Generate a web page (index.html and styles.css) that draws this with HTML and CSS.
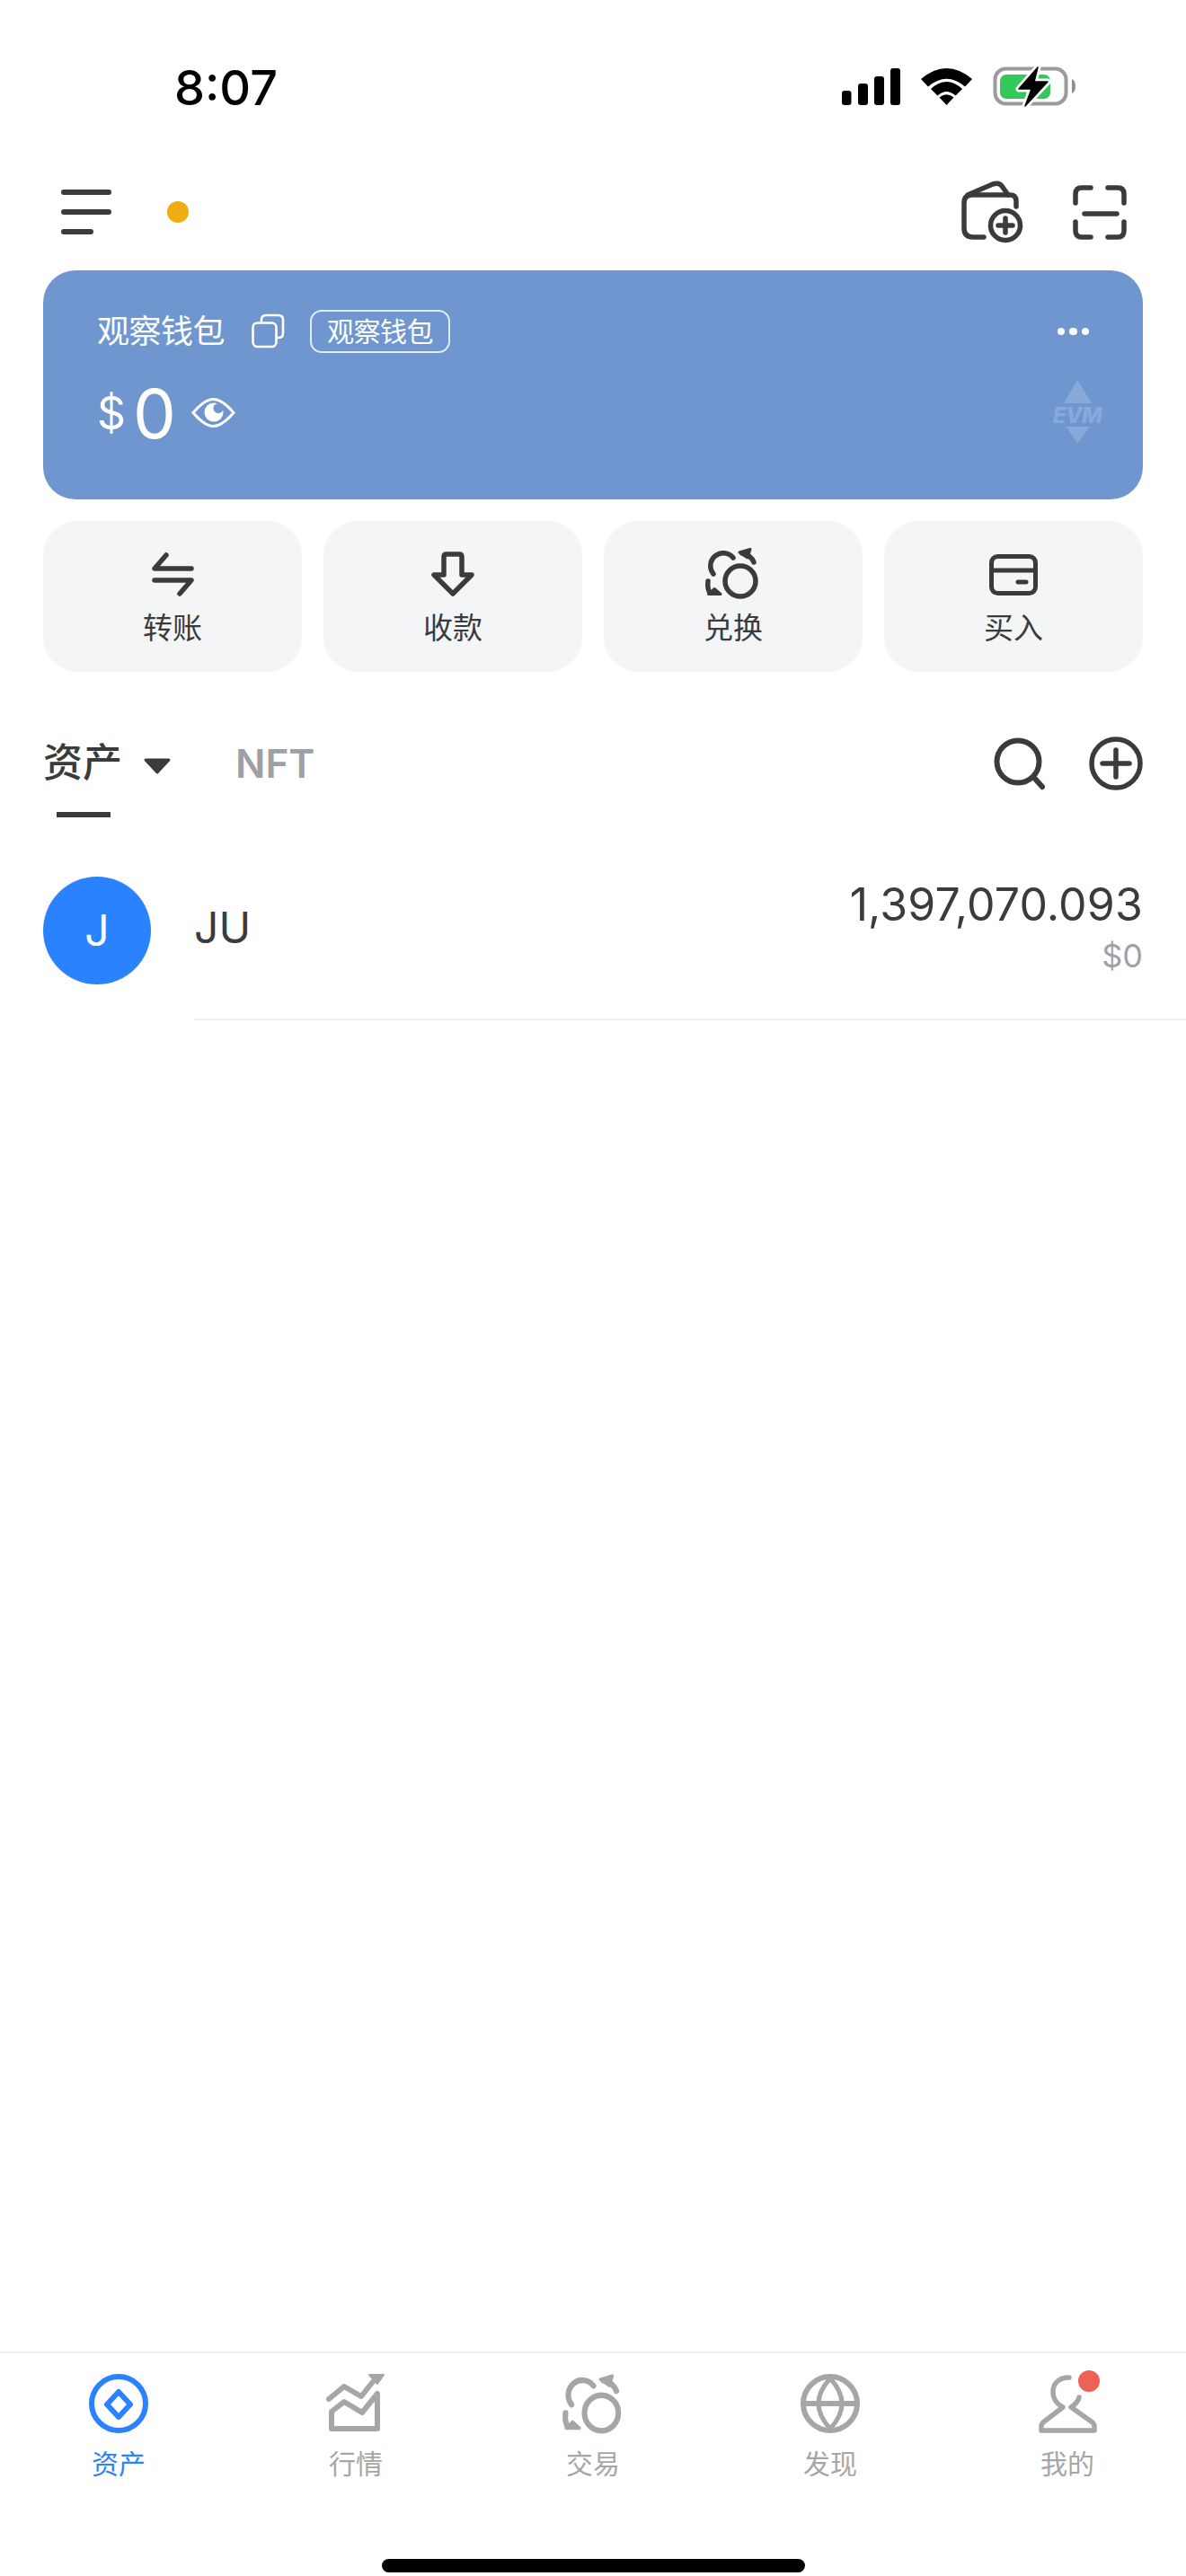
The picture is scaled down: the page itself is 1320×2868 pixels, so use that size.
FILE: index.html
```html
<!DOCTYPE html>
<html lang="zh-CN">
<head>
<meta charset="utf-8">
<title>钱包</title>
<link rel="stylesheet" href="styles.css">
</head>
<body>
<svg class="defs" width="0" height="0">
  <symbol id="swap" viewBox="784 608 64 60" preserveAspectRatio="none">
    <g fill="none" stroke="currentColor" stroke-width="5.5" stroke-linecap="round" stroke-linejoin="round">
      <circle cx="824" cy="647" r="17"/>
      <path d="M816 621A14 14 0 1 0 794 639"/>
      <path d="M826 616Q836 618 839 626"/>
      <path d="M788 647Q787 655 790 660"/>
      <path fill="currentColor" stroke-width="3" d="M835 611.500 823 615 832 621Z"/>
      <path fill="currentColor" stroke-width="3" d="M788.500 661.500H802L795 655.500Z"/>
    </g>
  </symbol>
</svg>
<div class="screen">
  <header class="status">
    <span class="time">8:07</span>
    <svg class="status-icons" width="262" height="48" viewBox="936 73 262 48">
      <g fill="#000">
        <rect x="937" y="101" width="10.500" height="16" rx="3"/>
        <rect x="955" y="93" width="11" height="24" rx="3"/>
        <rect x="973" y="85" width="11" height="32" rx="3"/>
        <rect x="991" y="76" width="11" height="41" rx="3"/>
        <path d="M1025 88Q1053.500 64 1082 88L1074 96.500Q1053.500 79 1033 96.500Z"/>
        <path d="M1036 99Q1053.500 83 1071 99L1063.500 106.500Q1053.500 97.500 1043.500 106.500Z"/>
        <path d="M1045.500 108.500Q1053.500 102 1061.500 108.500L1053.500 117Z"/>
      </g>
      <rect x="1107.500" y="76.500" width="79" height="39" rx="12" fill="none" stroke="#9b9b9b" stroke-width="4"/>
      <rect x="1113" y="83" width="56" height="27" rx="7" fill="#34c759"/>
      <path d="M1193 88Q1197 90 1197 96Q1197 102 1193 104Z" fill="#8f8f8f"/>
      <path d="M1155 75 1134 99H1148L1141 118 1166 91H1151Z" fill="#000" stroke="#fff" stroke-width="7" stroke-linejoin="round"/>
      <path d="M1155 75 1134 99H1148L1141 118 1166 91H1151Z" fill="#000" stroke="#000" stroke-width="1.500" stroke-linejoin="round"/>
    </svg>
  </header>

  <nav class="topbar">
    <div class="topbar-left">
      <div class="menu">
        <span class="menu-line"></span>
        <span class="menu-line"></span>
        <span class="menu-line menu-line-short"></span>
      </div>
      <span class="status-dot"></span>
    </div>
    <div class="topbar-right">
      <svg class="icon" width="70" height="70" viewBox="1069 201 70 70" fill="none" stroke="#3a3b3d" stroke-width="5.500" stroke-linecap="round" stroke-linejoin="round">
        <path d="M1131 230V224Q1131 217 1124 217H1082Q1073 217 1073 226V254Q1073 264 1083 264H1095"/>
        <path d="M1077 217 1105 205Q1112 203 1115 207L1122 217"/>
        <circle cx="1119" cy="251" r="16.500"/>
        <path d="M1119 243V259M1111 251H1127"/>
      </svg>
      <svg class="icon" width="64" height="64" viewBox="1192 202 64 64" fill="none" stroke="#3a3b3d" stroke-width="5.500" stroke-linecap="round">
        <path d="M1197 224V214Q1197 207 1204 207H1214"/>
        <path d="M1233 207H1244Q1251 207 1251 214V224"/>
        <path d="M1197 245V255Q1197 262 1204 262H1214"/>
        <path d="M1251 245V255Q1251 262 1244 262H1233"/>
        <path d="M1207 236H1243"/>
      </svg>
    </div>
  </nav>

  <section class="card">
    <div class="card-title-row">
      <span class="card-title">观察钱包</span>
      <svg class="copy" width="38" height="40" viewBox="279 349 38 40" fill="none" stroke="#fff" stroke-width="2.600">
        <rect x="281.500" y="359.500" width="26" height="26.500" rx="5"/>
        <path d="M291 358V356Q291 351 296 351H310Q315 351 315 356V371Q315 376 310 376H308"/>
      </svg>
      <span class="badge">观察钱包</span>
      <span class="more"><i></i><i></i><i></i></span>
    </div>
    <div class="amount-row">
      <span class="currency">$</span>
      <span class="amount">0</span>
      <svg class="eye" width="50" height="36" viewBox="214 444 50 36">
        <path d="M216 461.500C225 451 232 446.500 238.500 446.500C245 446.500 252 451 261 461.500C252 472 245 476.500 238.500 476.500C232 476.500 225 472 216 461.500Z" fill="none" stroke="#fff" stroke-width="3"/>
        <circle cx="239" cy="461" r="10.500" fill="#fff"/>
        <circle cx="244" cy="456.500" r="5.500" fill="#6f96cf"/>
      </svg>
    </div>
    <svg class="evm" width="60" height="74" viewBox="1169 422 60 74">
      <g fill="#88a9da">
        <path d="M1199 423 1215 449H1184Z"/>
        <path d="M1187 475H1213L1199 494Z"/>
        <text x="1199" y="471" text-anchor="middle" class="evm-text">EVM</text>
      </g>
    </svg>
  </section>

  <section class="actions">
    <div class="action">
      <svg width="54" height="54" viewBox="166 613 54 54" fill="none" stroke="#3a3b3d" stroke-width="5.500" stroke-linecap="round" stroke-linejoin="round">
        <path d="M186 618 173 633H214"/>
        <path d="M173 646H214L201 661"/>
      </svg>
      <span class="action-label">转账</span>
    </div>
    <div class="action">
      <svg width="54" height="54" viewBox="477 613 54 54" fill="none" stroke="#3a3b3d" stroke-width="5.500" stroke-linecap="round" stroke-linejoin="round">
        <path d="M494 640V620Q494 617 497 617H511Q514 617 514 620V640H525L504 661 483 640Z"/>
      </svg>
      <span class="action-label">收款</span>
    </div>
    <div class="action action-swap">
      <svg class="swap-action" width="64" height="60"><use href="#swap"/></svg>
      <span class="action-label">兑换</span>
    </div>
    <div class="action">
      <svg width="54" height="54" viewBox="1101 613 54 54" fill="none" stroke="#3a3b3d" stroke-width="5" stroke-linecap="round">
        <rect x="1103.500" y="619.500" width="49" height="41" rx="7"/>
        <path d="M1103.500 635H1152.500M1133 648H1142"/>
      </svg>
      <span class="action-label">买入</span>
    </div>
  </section>

  <section class="tabs">
    <div class="tab-active">
      <div class="tab-head">
        <span class="tab-name">资产</span>
        <svg class="caret" width="32" height="20" viewBox="159 847 32 20">
          <path d="M162 850H188L175 864Z" fill="#3a3b3d" stroke="#3a3b3d" stroke-width="3" stroke-linejoin="round"/>
        </svg>
      </div>
      <span class="tab-underline"></span>
    </div>
    <span class="tab-nft">NFT</span>
    <div class="tab-tools">
      <svg width="60" height="60" viewBox="1105 821 60 60" fill="none" stroke="#3a3b3d" stroke-width="6" stroke-linecap="round">
        <circle cx="1133" cy="849" r="23.500"/>
        <path d="M1152 868 1160 877"/>
      </svg>
      <svg width="62" height="62" viewBox="1211 819 62 62" fill="none" stroke="#3a3b3d" stroke-width="5.500" stroke-linecap="round">
        <circle cx="1242" cy="850" r="27"/>
        <path d="M1242 835V865M1227 850H1257"/>
      </svg>
    </div>
  </section>

  <section class="asset">
    <span class="asset-logo">J</span>
    <span class="asset-name">JU</span>
    <div class="asset-values">
      <span class="asset-amount">1,397,070.093</span>
      <span class="asset-fiat">$0</span>
    </div>
  </section>
  <div class="divider"></div>

  <footer class="tabbar">
    <div class="tabbar-items">
      <div class="tab-item tab-item-active">
        <svg width="72" height="72" viewBox="96 2640 72 72" fill="none" stroke="currentColor" stroke-width="6" stroke-linejoin="round">
          <circle cx="132" cy="2676" r="30"/>
          <path d="M132 2663 145 2677 132 2691 119 2677Z"/>
        </svg>
        <span class="tab-label">资产</span>
      </div>
      <div class="tab-item">
        <svg width="72" height="72" viewBox="360 2640 72 72" fill="none" stroke="currentColor" stroke-width="6" stroke-linecap="round" stroke-linejoin="round">
          <path d="M366 2671 383 2657 402 2668 418 2648"/>
          <path d="M411 2644H427L420 2654Z" fill="currentColor" stroke-width="2"/>
          <path d="M369 2704V2685L383 2674 403 2686 420 2665V2704Z"/>
        </svg>
        <span class="tab-label">行情</span>
      </div>
      <div class="tab-item">
        <svg class="swap-nav" width="71" height="70"><use href="#swap"/></svg>
        <span class="tab-label">交易</span>
      </div>
      <div class="tab-item">
        <svg width="72" height="72" viewBox="887 2640 72 72" fill="none" stroke="currentColor" stroke-width="6">
          <circle cx="923" cy="2676" r="30"/>
          <path d="M923 2648Q897 2676 923 2704Q949 2676 923 2648Z" stroke-width="5"/>
          <path d="M893 2676H953"/>
        </svg>
        <span class="tab-label">发现</span>
      </div>
      <div class="tab-item">
        <div class="tab-icon-wrap">
          <svg width="72" height="72" viewBox="1152 2640 72 72" fill="none" stroke="currentColor" stroke-width="5.500" stroke-linecap="round" stroke-linejoin="round">
            <path d="M1190 2647C1178 2647 1172 2654 1172 2663C1172 2671 1177 2677 1183 2680L1161 2697Q1159 2699 1159 2701V2706H1218V2701Q1218 2699 1216 2697L1192 2680C1197 2677 1200 2673 1201 2669"/>
          </svg>
          <span class="tab-dot"></span>
        </div>
        <span class="tab-label">我的</span>
      </div>
    </div>
    <div class="home-indicator"></div>
  </footer>
</div>
</body>
</html>
```

FILE: styles.css
```css
* { box-sizing: border-box; }
html, body { margin: 0; padding: 0; background: #fff; }
body { font-family: "Inter", "Noto Sans CJK SC", sans-serif; color: #3a3b3d; }
svg { display: block; flex: none; }
.defs { position: absolute; }

.screen { width: 1320px; height: 2868px; display: flex; flex-direction: column; overflow: hidden; }

.status { height: 140px; padding: 54px 122px 0 194px; display: flex; justify-content: space-between; align-items: center; }
.time { font-size: 54px; line-height: 86px; font-weight: 500; color: #000; padding-top: 2px; }

.topbar { height: 161px; padding: 31px 64px 0 68px; display: flex; justify-content: space-between; align-items: center; }
.topbar-left { display: flex; align-items: center; gap: 62px; }
.menu { width: 56px; display: flex; flex-direction: column; gap: 16px; }
.menu-line { display: block; height: 6px; width: 56px; border-radius: 3px; background: #3a3b3d; }
.menu-line-short { width: 36px; }
.status-dot { width: 24px; height: 24px; border-radius: 50%; background: #efad14; }
.topbar-right { display: flex; align-items: center; gap: 53px; }

.card { position: relative; margin: 0 48px; height: 255px; padding: 44px 60px 0 60px; border-radius: 36px; background: #6f96cf; color: #fff; }
.card-title-row { display: flex; align-items: center; height: 48px; }
.card-title { font-size: 36px; line-height: 48px; letter-spacing: -0.5px; }
.copy { margin-left: 29px; }
.badge { margin-left: 28px; width: 156px; height: 48px; border: 2px solid #e4ebf6; border-radius: 13px; font-size: 30px; line-height: 44px; text-align: center; letter-spacing: -0.5px; }
.more { margin-left: auto; display: flex; gap: 5px; }
.more i { display: block; width: 8.500px; height: 8.500px; border-radius: 50%; background: #fff; }
.amount-row { display: flex; align-items: center; margin-top: 29px; height: 76px; }
.currency { font-size: 50px; line-height: 76px; font-weight: 400; margin-left: 0; }
.amount { font-size: 76px; line-height: 76px; font-weight: 400; margin-left: 8px; }
.eye { margin-left: 17px; }
.evm { position: absolute; left: 1121px; top: 121px; }
.evm-text { font-family: "Inter", sans-serif; font-size: 24px; font-weight: 800; font-style: italic; letter-spacing: -0.5px; }

.actions { margin: 24px 48px 0; display: grid; grid-template-columns: repeat(4, 288px); gap: 24px; }
.action { height: 168px; padding-top: 33px; border-radius: 38px; background: #f4f5f7; display: flex; flex-direction: column; align-items: center; }
.action-label { margin-top: 9px; font-size: 33px; line-height: 46px; }
.action-swap { padding-top: 28px; }
.swap-action { display: block; color: #3a3b3d; }
.action-swap .action-label { margin-top: 8px; }

.tabs { height: 164px; padding: 73px 48px 0; display: flex; align-items: flex-start; }
.tab-active { width: 214px; display: flex; flex-direction: column; }
.tab-head { display: flex; align-items: center; height: 58px; }
.tab-name { font-size: 44px; line-height: 58px; font-weight: 500; margin-top: -2px; }
.caret { margin-left: 23px; margin-top: 6px; }
.tab-underline { display: block; width: 60px; height: 6px; margin: 25px 0 0 15px; background: #3a3b3d; }
.tab-nft { font-size: 44px; line-height: 58px; font-weight: 600; color: #9fa0a6; }
.tab-tools { margin-left: auto; margin-right: -1px; margin-top: -2px; display: flex; align-items: center; gap: 46px; }

.asset { margin-top: 64px; padding: 0 48px; height: 120px; display: flex; align-items: center; }
.asset-logo { width: 120px; height: 120px; border-radius: 50%; background: #2b82fe; color: #fff; font-size: 48px; line-height: 120px; text-align: center; flex: none; }
.asset-name { margin: -6px 0 0 48px; font-size: 48px; line-height: 60px; }
.asset-values { margin-left: auto; display: flex; flex-direction: column; align-items: flex-end; }
.asset-amount { font-size: 50px; line-height: 60px; margin-top: -8px; letter-spacing: 0.15px; }
.asset-fiat { font-size: 36px; line-height: 46px; margin-top: 4px; color: #a0a1a7; }
.divider { margin: 38px 0 0 216px; height: 2px; background: #eeeeee; }

.tabbar { margin-top: auto; height: 250px; border-top: 2px solid #eeeeee; display: flex; flex-direction: column; }
.tabbar-items { display: grid; grid-template-columns: repeat(5, 264px); padding-top: 20px; }
.tab-item { display: flex; flex-direction: column; align-items: center; color: #a6a6a6; }
.tab-item-active { color: #2b82fe; }
.swap-nav { margin: 1px 0; }
.tab-label { margin-top: 10px; font-size: 30px; line-height: 42px; }
.tab-icon-wrap { position: relative; }
.tab-dot { position: absolute; left: 48px; top: -1px; width: 24px; height: 24px; border-radius: 50%; background: #ed6257; }
.home-indicator { margin: 85px auto 0; width: 471px; height: 15px; border-radius: 8px; background: #000; }
```
